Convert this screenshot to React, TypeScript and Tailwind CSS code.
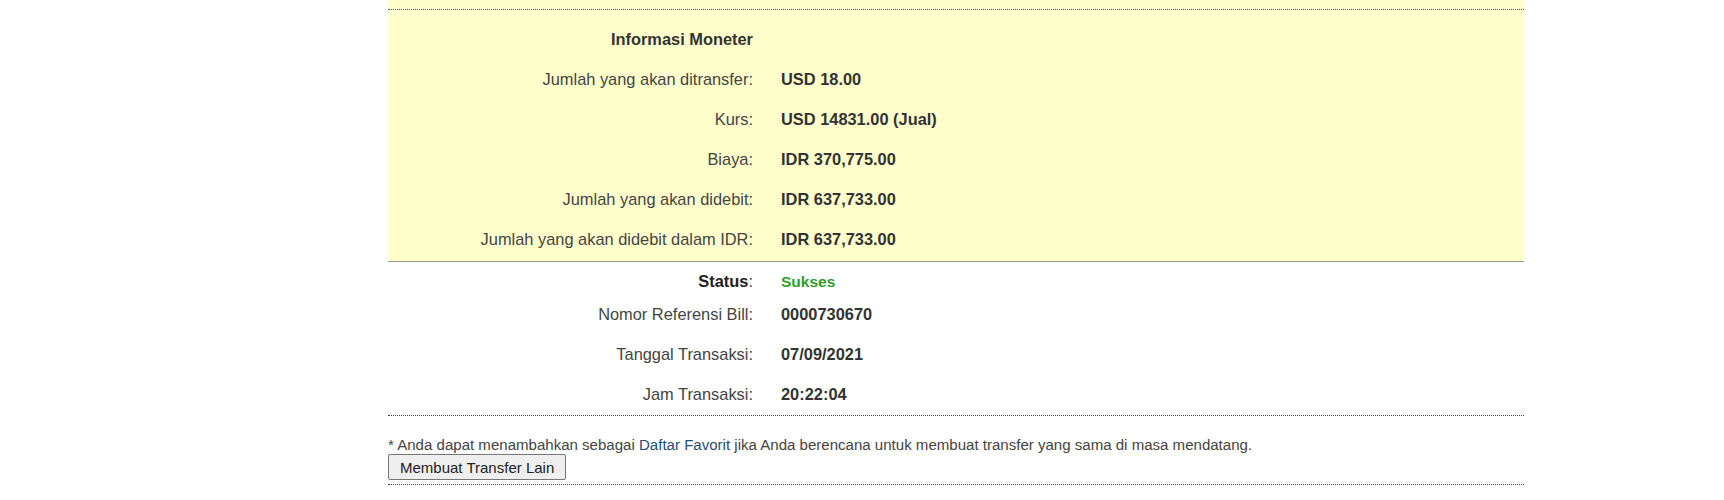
const font = { fontFamily: '"Liberation Sans", Arial, Helvetica, sans-serif' };

interface Row {
  label: string;
  value: string;
}

const monetary: Row[] = [
  { label: 'Jumlah yang akan ditransfer:', value: 'USD 18.00' },
  { label: 'Kurs:', value: 'USD 14831.00 (Jual)' },
  { label: 'Biaya:', value: 'IDR 370,775.00' },
  { label: 'Jumlah yang akan didebit:', value: 'IDR 637,733.00' },
  { label: 'Jumlah yang akan didebit dalam IDR:', value: 'IDR 637,733.00' },
];

const details: Row[] = [
  { label: 'Nomor Referensi Bill:', value: '0000730670' },
  { label: 'Tanggal Transaksi:', value: '07/09/2021' },
  { label: 'Jam Transaksi:', value: '20:22:04' },
];

function InfoRow({ label, value, height = 'h-[40px]' }: Row & { height?: string }) {
  return (
    <div className={`grid grid-cols-[365px_1fr] items-center gap-x-[28px] ${height}`}>
      <div className="text-right text-[#444]">{label}</div>
      <div className="font-bold text-[#333]">{value}</div>
    </div>
  );
}

export default function App() {
  return (
    <div className="min-h-[500px] bg-white text-[16.4px] leading-[19px]" style={font}>
      <div className="ml-[388px] w-[1136px]">
        <div className="bg-[#ffffcc]">
          <div className="h-[9px]" />
          <div className="border-t border-dotted border-[#555]" />
          <div className="pt-[9px] pb-[2px]">
            <div className="grid h-[40px] grid-cols-[365px_1fr] items-center gap-x-[28px]">
              <div className="text-right font-bold text-[#333]">Informasi Moneter</div>
              <div />
            </div>
            {monetary.map((r) => (
              <InfoRow key={r.label} {...r} />
            ))}
          </div>
          <div className="border-b border-[#9c9a8e]" />
        </div>

        <div className="border-b border-dotted border-[#444] pt-[6px] pb-[1px]">
          <div className="grid h-[26px] grid-cols-[365px_1fr] items-center gap-x-[28px]">
            <div className="text-right text-[#444]">
              <span className="font-bold text-[#222]">Status</span>:
            </div>
            <div className="text-[15.5px] font-bold text-[#2f9e2f]">Sukses</div>
          </div>
          {details.map((r) => (
            <InfoRow key={r.label} {...r} />
          ))}
        </div>

        <div className="border-b border-dotted border-[#444] pt-[19px] pb-[4px] text-[15.05px] text-[#444]">
          <p className="leading-[19px]">
            * Anda dapat menambahkan sebagai{' '}
            <a href="#" className="text-[#1f4e79]">
              Daftar Favorit
            </a>{' '}
            jika Anda berencana untuk membuat transfer yang sama di masa mendatang.
          </p>
          <button
            type="button"
            className="h-[26px] rounded-[2px] border border-[#767676] bg-[#efefef] px-[11px] text-[15px] text-[#222]"
          >
            Membuat Transfer Lain
          </button>
        </div>
      </div>
    </div>
  );
}
